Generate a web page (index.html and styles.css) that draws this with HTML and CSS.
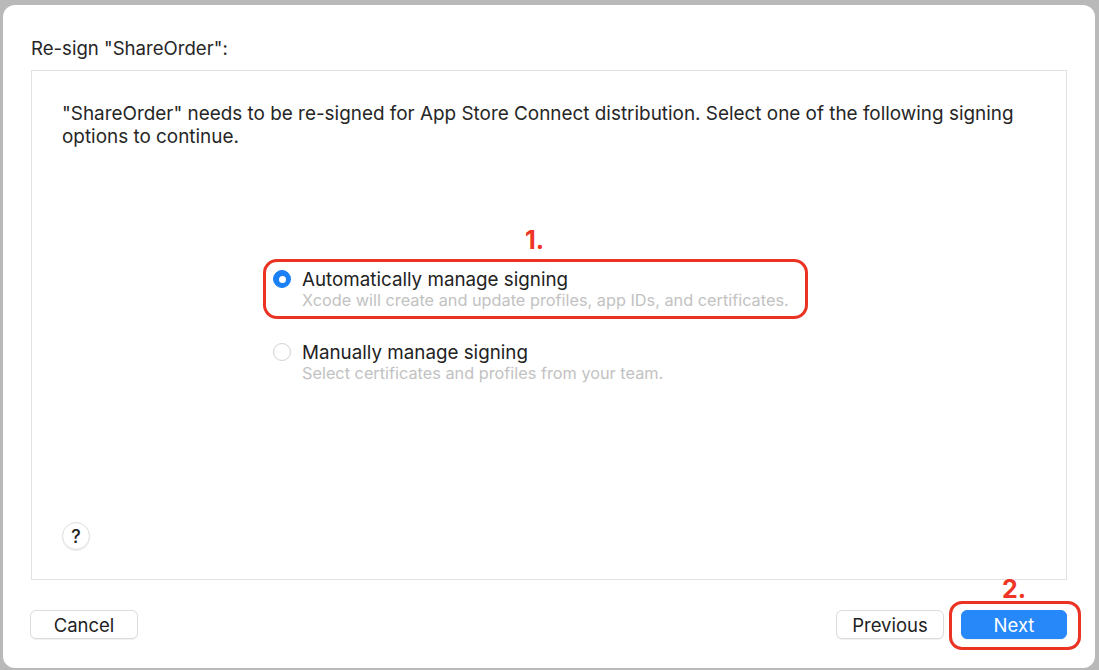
FILE: index.html
```html
<!DOCTYPE html>
<html>
<head>
<meta charset="utf-8">
<link rel="stylesheet" href="styles.css">
</head>
<body>
<div class="dialog">
  <div class="title">Re-sign "ShareOrder":</div>
  <div class="panel">
    <p class="intro">"ShareOrder" needs to be re-signed for App Store Connect distribution. Select one of the following signing options to continue.</p>
    <div class="options">
      <div class="option annotated">
        <span class="radio checked"></span>
        <div class="option-text">
          <div class="option-label">Automatically manage signing</div>
          <div class="option-desc">Xcode will create and update profiles, app IDs, and certificates.</div>
        </div>
        <span class="frame frame-1"></span>
        <span class="mark mark-1">1.</span>
      </div>
      <div class="option">
        <span class="radio"></span>
        <div class="option-text">
          <div class="option-label">Manually manage signing</div>
          <div class="option-desc">Select certificates and profiles from your team.</div>
        </div>
      </div>
    </div>
    <div class="spacer"></div>
    <div class="help">?</div>
  </div>
  <div class="footer">
    <button class="btn">Cancel</button>
    <div class="grow"></div>
    <button class="btn">Previous</button>
    <div class="next-wrap">
      <button class="btn primary">Next</button>
      <span class="frame frame-2"></span>
      <span class="mark mark-2">2.</span>
    </div>
  </div>
</div>
</body>
</html>
```
FILE: styles.css
```css
html, body {
  margin: 0;
  padding: 0;
  height: 100%;
}
body {
  background: #b9b9b9;
  font-family: Inter, "Liberation Sans", sans-serif;
  color: #222;
  overflow: hidden;
}
.dialog {
  margin: 5px 4px 0 3px;
  height: 663px;
  background: #fff;
  border-radius: 12px;
  padding: 32px 28px 0 28px;
  box-sizing: border-box;
  display: flex;
  flex-direction: column;
}
.title {
  font-size: 18.6px;
  line-height: 22px;
  height: 22px;
  color: #262626;
}
.panel {
  margin-top: 11px;
  height: 510px;
  border: 1px solid #e3e3e3;
  box-sizing: border-box;
  display: flex;
  flex-direction: column;
  padding: 0 29px 29px 30px;
}
.intro {
  margin: 31px 0 0 0;
  font-size: 18.9px;
  line-height: 23px;
  color: #262626;
}
.options {
  margin: 121px 0 0 211px;
  display: flex;
  flex-direction: column;
  gap: 33px;
  align-items: flex-start;
}
.option {
  position: relative;
  display: flex;
  gap: 11px;
  align-items: flex-start;
}
.radio {
  width: 18px;
  height: 18px;
  box-sizing: border-box;
  border-radius: 50%;
  border: 1px solid #d2d2d2;
  background: #fff;
  margin-top: 1px;
  flex: none;
  display: flex;
  align-items: center;
  justify-content: center;
}
.radio.checked {
  background: #1b80f6;
  border-color: #1b80f6;
}
.radio.checked::after {
  content: "";
  width: 7px;
  height: 7px;
  border-radius: 50%;
  background: #fff;
}
.option-label {
  font-size: 18.8px;
  line-height: 22px;
  color: #222;
}
.option-desc {
  font-size: 16.3px;
  line-height: 18px;
  color: #c2c2c2;
}
.frame {
  position: absolute;
  border: 3px solid #ea3323;
  pointer-events: none;
}
.frame-1 {
  left: -10px;
  right: -19px;
  top: -10px;
  bottom: -10px;
  border-radius: 14px;
}
.mark {
  position: absolute;
  color: #ee3526;
  font-weight: 700;
  font-size: 25px;
  line-height: 26px;
  font-family: Inter, "Liberation Sans", sans-serif;
}
.mark-1 {
  left: 252px;
  top: -42px;
}
.spacer {
  flex: 1;
}
.help {
  width: 28px;
  height: 28px;
  box-sizing: border-box;
  border-radius: 50%;
  border: 1px solid #dedede;
  box-shadow: 0 1px 1px rgba(0,0,0,0.08);
  font-size: 18px;
  font-weight: 500;
  display: flex;
  align-items: center;
  justify-content: center;
  color: #222;
}
.footer {
  margin-top: 30px;
  display: flex;
  align-items: center;
}
.grow {
  flex: 1;
}
.btn {
  font-family: Inter, "Liberation Sans", sans-serif;
  font-size: 18.5px;
  height: 29px;
  width: 108px;
  border-radius: 6px;
  border: 1px solid #dcdcdc;
  background: #fff;
  color: #222;
  box-shadow: 0 1px 1px rgba(0,0,0,0.06);
  padding: 0;
}
.btn:first-child {
  margin-left: -1px;
}
.next-wrap {
  position: relative;
  margin-left: 18px;
  display: flex;
}
.btn.primary {
  width: 106px;
  background: #2688f9;
  border-color: #2688f9;
  color: #fff;
}
.frame-2 {
  left: -13px;
  right: -14px;
  top: -9px;
  bottom: -11px;
  border-radius: 13px;
}
.mark-2 {
  left: 40px;
  top: -34px;
}
```
